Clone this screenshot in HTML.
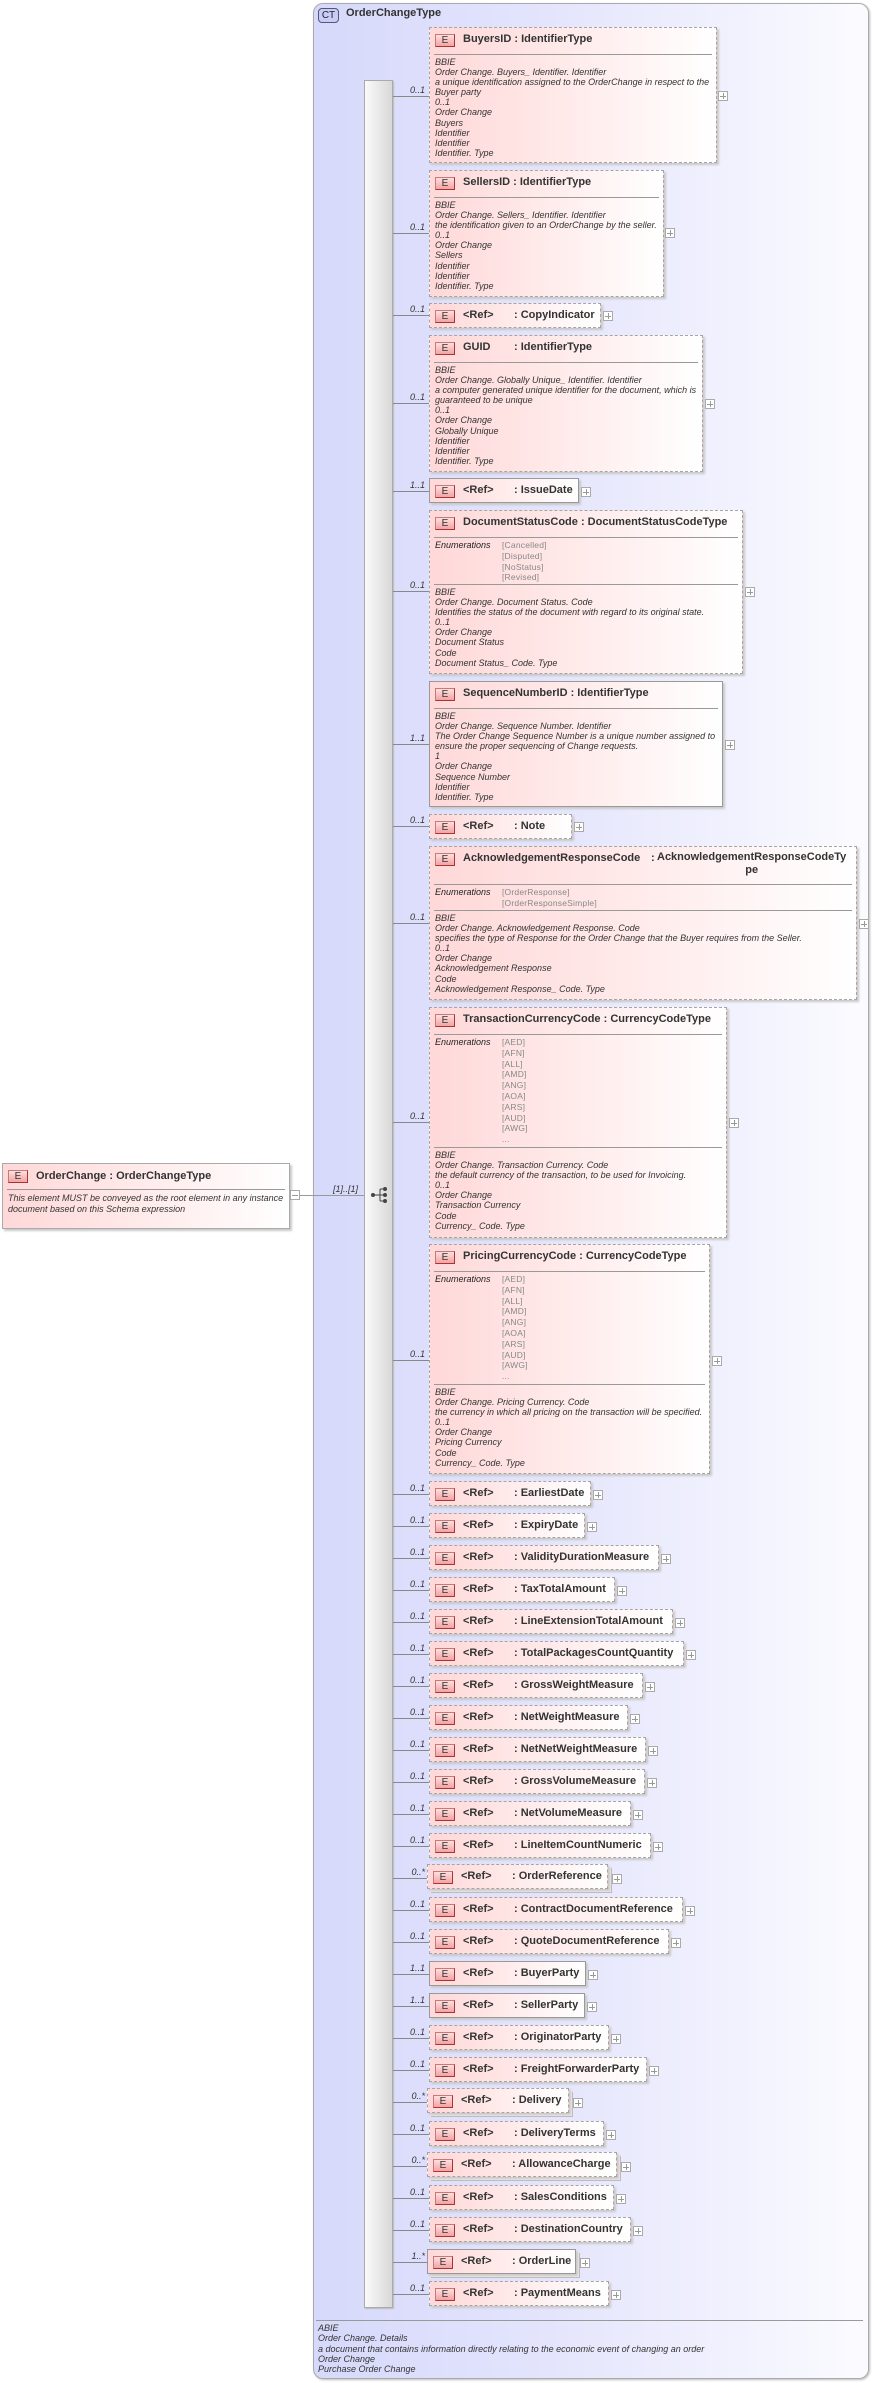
<!DOCTYPE html>
<html><head><meta charset="utf-8">
<style>
*{margin:0;padding:0}
body{width:874px;height:2383px;position:relative;background:#fff;font-family:"Liberation Sans",Arial,sans-serif;color:#222;overflow:hidden}
.ct{position:absolute;left:313px;top:3px;width:556px;height:2376px;box-sizing:border-box;border:1px solid #aaa;border-radius:10px;background:linear-gradient(to right,#d7d9fb 0%,#e3e4fc 40%,#fbfbff 100%);box-shadow:1px 1px 2px #bbb}
.ctb{position:absolute;left:318px;top:8px;width:19px;height:13px;border:1px solid #557;border-radius:4px;background:#c9cdf5;font-size:10px;line-height:13px;text-align:center;color:#223}
.ctt{position:absolute;left:346px;top:7px;font-size:11px;font-weight:bold;color:#333}
.bar{position:absolute;left:364px;top:80px;width:29px;height:2228px;box-sizing:border-box;border:1px solid #aaa;background:linear-gradient(to right,#fafafa,#d8d8d8);box-shadow:1px 1px 1px #bbb}
.b{position:absolute;left:429px;box-sizing:border-box;border:1px dashed #a5a5a5;background:linear-gradient(to right,#ffd8d8 0%,#ffe9e9 45%,#ffffff 100%);box-shadow:2px 2px 2px #c8c8c8}
.s{border-style:solid;border-color:#999}
.e{position:absolute;left:5px;top:6px;width:20px;height:13px;box-sizing:border-box;border:1px solid #a33;border-top-color:#c77;border-left-color:#c77;background:linear-gradient(#fde0e0,#f3a3a3);font-size:10px;line-height:12px;text-align:center;color:#333}
.t{position:absolute;left:33px;top:5px;font-size:11px;font-weight:bold;white-space:nowrap;color:#333}
.t2{position:absolute;left:84px;top:5px;font-size:11px;font-weight:bold;white-space:nowrap;color:#333}
.hr{position:absolute;left:4px;right:4px;height:0;border-top:1px solid #999}
.ds{position:absolute;left:5px;font-size:9px;line-height:10.1px;font-style:italic;white-space:nowrap;color:#333}
.en{position:absolute;left:5px;font-size:9px;font-style:italic;color:#222}
.ev{position:absolute;left:72px;font-size:8.5px;line-height:10.8px;color:#888;white-space:nowrap;letter-spacing:.2px}
.ln{position:absolute;left:393px;width:36px;height:0;border-top:1px solid #888}
.m{position:absolute;left:395px;width:30px;text-align:right;font-size:9px;font-style:italic;color:#333}
.p{position:absolute;width:8px;height:8px;border:1px solid #aaa;background:#fff}
.p:before{content:"";position:absolute;left:1px;top:4px;width:6px;height:1px;background:#999}
.p:after{content:"";position:absolute;left:4px;top:1px;width:1px;height:6px;background:#999}
.mul{box-shadow:2px 2px 2px #c8c8c8,3px 3px 0 0 #f7e8e8,4px 4px 0 0 #bbb}
</style></head><body>

<!-- root element -->
<div class="b s" style="left:2px;top:1163px;width:288px;height:66px;border-color:#aaa">
  <span class="e">E</span><span class="t" style="top:6px">OrderChange : OrderChangeType</span>
  <div class="hr" style="top:25px"></div>
  <div class="ds" style="top:29px;line-height:10.5px">This element MUST be conveyed as the root element in any instance<br>document based on this Schema expression</div>
</div>
<div style="position:absolute;left:290px;top:1190px;width:8px;height:8px;border:1px solid #aaa;background:#fff"><div style="position:absolute;left:1px;top:4px;width:6px;height:1px;background:#999"></div></div>
<div style="position:absolute;left:299px;top:1195px;width:65px;border-top:1px solid #999"></div>

<div class="ct"></div>
<div class="ctb">CT</div>
<div class="ctt">OrderChangeType</div>
<div style="position:absolute;left:313px;top:1195px;width:51px;border-top:1px solid #999"></div>
<div style="position:absolute;left:333px;top:1184px;font-size:9px;font-style:italic;color:#333">[1]..[1]</div>
<div class="bar"></div>
<svg style="position:absolute;left:370px;top:1186px" width="20" height="20" viewBox="0 0 20 20">
<circle cx="3" cy="9" r="2" fill="#444"/><line x1="3" y1="9" x2="10" y2="9" stroke="#444"/><line x1="10" y1="3" x2="10" y2="15" stroke="#444"/>
<line x1="10" y1="3" x2="15" y2="3" stroke="#444"/><line x1="10" y1="9" x2="15" y2="9" stroke="#444"/><line x1="10" y1="15" x2="15" y2="15" stroke="#444"/>
<circle cx="15" cy="3" r="2" fill="#444"/><circle cx="15" cy="9" r="2" fill="#444"/><circle cx="15" cy="15" r="2" fill="#444"/></svg>

<!-- BuyersID -->
<div class="ln" style="top:96px"></div><div class="m" style="top:85px">0..1</div>
<div class="b" style="top:27px;width:288px;height:136px"><span class="e">E</span><span class="t">BuyersID : IdentifierType</span><div class="hr" style="top:26px"></div>
<div class="ds" style="top:29px">BBIE<br>Order Change. Buyers_ Identifier. Identifier<br>a unique identification assigned to the OrderChange in respect to the<br>Buyer party<br>0..1<br>Order Change<br>Buyers<br>Identifier<br>Identifier<br>Identifier. Type</div></div>
<div class="p" style="left:718px;top:91px"></div>

<!-- SellersID -->
<div class="ln" style="top:233px"></div><div class="m" style="top:222px">0..1</div>
<div class="b" style="top:170px;width:235px;height:127px"><span class="e">E</span><span class="t">SellersID : IdentifierType</span><div class="hr" style="top:26px"></div>
<div class="ds" style="top:29px">BBIE<br>Order Change. Sellers_ Identifier. Identifier<br>the identification given to an OrderChange by the seller.<br>0..1<br>Order Change<br>Sellers<br>Identifier<br>Identifier<br>Identifier. Type</div></div>
<div class="p" style="left:665px;top:228px"></div>

<!-- CopyIndicator -->
<div class="ln" style="top:315px"></div><div class="m" style="top:304px">0..1</div>
<div class="b" style="top:303px;width:172px;height:25px"><span class="e">E</span><span class="t">&lt;Ref&gt;</span><span class="t2">: CopyIndicator</span></div>
<div class="p" style="left:603px;top:311px"></div>

<!-- GUID -->
<div class="ln" style="top:403px"></div><div class="m" style="top:392px">0..1</div>
<div class="b" style="top:335px;width:274px;height:137px"><span class="e">E</span><span class="t">GUID</span><span class="t2">: IdentifierType</span><div class="hr" style="top:26px"></div>
<div class="ds" style="top:29px">BBIE<br>Order Change. Globally Unique_ Identifier. Identifier<br>a computer generated unique identifier for the document, which is<br>guaranteed to be unique<br>0..1<br>Order Change<br>Globally Unique<br>Identifier<br>Identifier<br>Identifier. Type</div></div>
<div class="p" style="left:705px;top:399px"></div>

<!-- IssueDate -->
<div class="ln" style="top:491px"></div><div class="m" style="top:480px">1..1</div>
<div class="b s" style="top:478px;width:150px;height:25px"><span class="e">E</span><span class="t">&lt;Ref&gt;</span><span class="t2">: IssueDate</span></div>
<div class="p" style="left:581px;top:487px"></div>

<!-- DocumentStatusCode -->
<div class="ln" style="top:591px"></div><div class="m" style="top:580px">0..1</div>
<div class="b" style="top:510px;width:314px;height:164px"><span class="e">E</span><span class="t">DocumentStatusCode : DocumentStatusCodeType</span><div class="hr" style="top:26px"></div>
<div class="en" style="top:29px">Enumerations</div><div class="ev" style="top:29px">[Cancelled]<br>[Disputed]<br>[NoStatus]<br>[Revised]</div>
<div class="hr" style="top:73px"></div>
<div class="ds" style="top:76px">BBIE<br>Order Change. Document Status. Code<br>Identifies the status of the document with regard to its original state.<br>0..1<br>Order Change<br>Document Status<br>Code<br>Document Status_ Code. Type</div></div>
<div class="p" style="left:745px;top:587px"></div>

<!-- SequenceNumberID -->
<div class="ln" style="top:744px"></div><div class="m" style="top:733px">1..1</div>
<div class="b s" style="top:681px;width:294px;height:126px"><span class="e">E</span><span class="t">SequenceNumberID : IdentifierType</span><div class="hr" style="top:26px"></div>
<div class="ds" style="top:29px">BBIE<br>Order Change. Sequence Number. Identifier<br>The Order Change Sequence Number is a unique number assigned to<br>ensure the proper sequencing of Change requests.<br>1<br>Order Change<br>Sequence Number<br>Identifier<br>Identifier. Type</div></div>
<div class="p" style="left:725px;top:740px"></div>

<!-- Note -->
<div class="ln" style="top:826px"></div><div class="m" style="top:815px">0..1</div>
<div class="b" style="top:814px;width:143px;height:25px"><span class="e">E</span><span class="t">&lt;Ref&gt;</span><span class="t2">: Note</span></div>
<div class="p" style="left:574px;top:822px"></div>

<!-- AcknowledgementResponseCode -->
<div class="ln" style="top:923px"></div><div class="m" style="top:912px">0..1</div>
<div class="b" style="top:846px;width:428px;height:154px"><span class="e">E</span><span class="t">AcknowledgementResponseCode</span><span class="t" style="left:221px">:</span><span class="t" style="left:227px;line-height:13px;text-align:center;top:4px">AcknowledgementResponseCodeTy<br>pe</span><div class="hr" style="top:37px"></div>
<div class="en" style="top:40px">Enumerations</div><div class="ev" style="top:40px">[OrderResponse]<br>[OrderResponseSimple]</div>
<div class="hr" style="top:63px"></div>
<div class="ds" style="top:66px">BBIE<br>Order Change. Acknowledgement Response. Code<br>specifies the type of Response for the Order Change that the Buyer requires from the Seller.<br>0..1<br>Order Change<br>Acknowledgement Response<br>Code<br>Acknowledgement Response_ Code. Type</div></div>
<div class="p" style="left:859px;top:919px"></div>

<!-- TransactionCurrencyCode -->
<div class="ln" style="top:1122px"></div><div class="m" style="top:1111px">0..1</div>
<div class="b" style="top:1007px;width:298px;height:231px"><span class="e">E</span><span class="t">TransactionCurrencyCode : CurrencyCodeType</span><div class="hr" style="top:26px"></div>
<div class="en" style="top:29px">Enumerations</div><div class="ev" style="top:29px">[AED]<br>[AFN]<br>[ALL]<br>[AMD]<br>[ANG]<br>[AOA]<br>[ARS]<br>[AUD]<br>[AWG]<br>...</div>
<div class="hr" style="top:139px"></div>
<div class="ds" style="top:142px">BBIE<br>Order Change. Transaction Currency. Code<br>the default currency of the transaction, to be used for Invoicing.<br>0..1<br>Order Change<br>Transaction Currency<br>Code<br>Currency_ Code. Type</div></div>
<div class="p" style="left:729px;top:1118px"></div>

<!-- PricingCurrencyCode -->
<div class="ln" style="top:1360px"></div><div class="m" style="top:1349px">0..1</div>
<div class="b" style="top:1244px;width:281px;height:230px"><span class="e">E</span><span class="t">PricingCurrencyCode : CurrencyCodeType</span><div class="hr" style="top:26px"></div>
<div class="en" style="top:29px">Enumerations</div><div class="ev" style="top:29px">[AED]<br>[AFN]<br>[ALL]<br>[AMD]<br>[ANG]<br>[AOA]<br>[ARS]<br>[AUD]<br>[AWG]<br>...</div>
<div class="hr" style="top:139px"></div>
<div class="ds" style="top:142px">BBIE<br>Order Change. Pricing Currency. Code<br>the currency in which all pricing on the transaction will be specified.<br>0..1<br>Order Change<br>Pricing Currency<br>Code<br>Currency_ Code. Type</div></div>
<div class="p" style="left:712px;top:1356px"></div>

<!-- refs -->
<div class="ln" style="top:1494px"></div><div class="m" style="top:1483px">0..1</div><div class="b" style="top:1481px;width:162px;height:25px"><span class="e">E</span><span class="t">&lt;Ref&gt;</span><span class="t2">: EarliestDate</span></div><div class="p" style="left:593px;top:1490px"></div>
<div class="ln" style="top:1526px"></div><div class="m" style="top:1515px">0..1</div><div class="b" style="top:1513px;width:156px;height:25px"><span class="e">E</span><span class="t">&lt;Ref&gt;</span><span class="t2">: ExpiryDate</span></div><div class="p" style="left:587px;top:1522px"></div>
<div class="ln" style="top:1558px"></div><div class="m" style="top:1547px">0..1</div><div class="b" style="top:1545px;width:230px;height:25px"><span class="e">E</span><span class="t">&lt;Ref&gt;</span><span class="t2">: ValidityDurationMeasure</span></div><div class="p" style="left:661px;top:1554px"></div>
<div class="ln" style="top:1590px"></div><div class="m" style="top:1579px">0..1</div><div class="b" style="top:1577px;width:186px;height:25px"><span class="e">E</span><span class="t">&lt;Ref&gt;</span><span class="t2">: TaxTotalAmount</span></div><div class="p" style="left:617px;top:1586px"></div>
<div class="ln" style="top:1622px"></div><div class="m" style="top:1611px">0..1</div><div class="b" style="top:1609px;width:244px;height:25px"><span class="e">E</span><span class="t">&lt;Ref&gt;</span><span class="t2">: LineExtensionTotalAmount</span></div><div class="p" style="left:675px;top:1618px"></div>
<div class="ln" style="top:1654px"></div><div class="m" style="top:1643px">0..1</div><div class="b" style="top:1641px;width:255px;height:25px"><span class="e">E</span><span class="t">&lt;Ref&gt;</span><span class="t2">: TotalPackagesCountQuantity</span></div><div class="p" style="left:686px;top:1650px"></div>
<div class="ln" style="top:1686px"></div><div class="m" style="top:1675px">0..1</div><div class="b" style="top:1673px;width:214px;height:25px"><span class="e">E</span><span class="t">&lt;Ref&gt;</span><span class="t2">: GrossWeightMeasure</span></div><div class="p" style="left:645px;top:1682px"></div>
<div class="ln" style="top:1718px"></div><div class="m" style="top:1707px">0..1</div><div class="b" style="top:1705px;width:199px;height:25px"><span class="e">E</span><span class="t">&lt;Ref&gt;</span><span class="t2">: NetWeightMeasure</span></div><div class="p" style="left:630px;top:1714px"></div>
<div class="ln" style="top:1750px"></div><div class="m" style="top:1739px">0..1</div><div class="b" style="top:1737px;width:217px;height:25px"><span class="e">E</span><span class="t">&lt;Ref&gt;</span><span class="t2">: NetNetWeightMeasure</span></div><div class="p" style="left:648px;top:1746px"></div>
<div class="ln" style="top:1782px"></div><div class="m" style="top:1771px">0..1</div><div class="b" style="top:1769px;width:216px;height:25px"><span class="e">E</span><span class="t">&lt;Ref&gt;</span><span class="t2">: GrossVolumeMeasure</span></div><div class="p" style="left:647px;top:1778px"></div>
<div class="ln" style="top:1814px"></div><div class="m" style="top:1803px">0..1</div><div class="b" style="top:1801px;width:202px;height:25px"><span class="e">E</span><span class="t">&lt;Ref&gt;</span><span class="t2">: NetVolumeMeasure</span></div><div class="p" style="left:633px;top:1810px"></div>
<div class="ln" style="top:1846px"></div><div class="m" style="top:1835px">0..1</div><div class="b" style="top:1833px;width:222px;height:25px"><span class="e">E</span><span class="t">&lt;Ref&gt;</span><span class="t2">: LineItemCountNumeric</span></div><div class="p" style="left:653px;top:1842px"></div>
<div class="ln" style="top:1878px"></div><div class="m" style="top:1867px">0..*</div><div class="b mul" style="top:1864px;left:427px;width:181px;height:25px"><span class="e">E</span><span class="t">&lt;Ref&gt;</span><span class="t2">: OrderReference</span></div><div class="p" style="left:612px;top:1874px"></div>
<div class="ln" style="top:1910px"></div><div class="m" style="top:1899px">0..1</div><div class="b" style="top:1897px;width:254px;height:25px"><span class="e">E</span><span class="t">&lt;Ref&gt;</span><span class="t2">: ContractDocumentReference</span></div><div class="p" style="left:685px;top:1906px"></div>
<div class="ln" style="top:1942px"></div><div class="m" style="top:1931px">0..1</div><div class="b" style="top:1929px;width:240px;height:25px"><span class="e">E</span><span class="t">&lt;Ref&gt;</span><span class="t2">: QuoteDocumentReference</span></div><div class="p" style="left:671px;top:1938px"></div>
<div class="ln" style="top:1974px"></div><div class="m" style="top:1963px">1..1</div><div class="b s" style="top:1961px;width:157px;height:25px"><span class="e">E</span><span class="t">&lt;Ref&gt;</span><span class="t2">: BuyerParty</span></div><div class="p" style="left:588px;top:1970px"></div>
<div class="ln" style="top:2006px"></div><div class="m" style="top:1995px">1..1</div><div class="b s" style="top:1993px;width:156px;height:25px"><span class="e">E</span><span class="t">&lt;Ref&gt;</span><span class="t2">: SellerParty</span></div><div class="p" style="left:587px;top:2002px"></div>
<div class="ln" style="top:2038px"></div><div class="m" style="top:2027px">0..1</div><div class="b" style="top:2025px;width:180px;height:25px"><span class="e">E</span><span class="t">&lt;Ref&gt;</span><span class="t2">: OriginatorParty</span></div><div class="p" style="left:611px;top:2034px"></div>
<div class="ln" style="top:2070px"></div><div class="m" style="top:2059px">0..1</div><div class="b" style="top:2057px;width:218px;height:25px"><span class="e">E</span><span class="t">&lt;Ref&gt;</span><span class="t2">: FreightForwarderParty</span></div><div class="p" style="left:649px;top:2066px"></div>
<div class="ln" style="top:2102px"></div><div class="m" style="top:2091px">0..*</div><div class="b mul" style="top:2088px;left:427px;width:142px;height:25px"><span class="e">E</span><span class="t">&lt;Ref&gt;</span><span class="t2">: Delivery</span></div><div class="p" style="left:573px;top:2098px"></div>
<div class="ln" style="top:2134px"></div><div class="m" style="top:2123px">0..1</div><div class="b" style="top:2121px;width:175px;height:25px"><span class="e">E</span><span class="t">&lt;Ref&gt;</span><span class="t2">: DeliveryTerms</span></div><div class="p" style="left:606px;top:2130px"></div>
<div class="ln" style="top:2166px"></div><div class="m" style="top:2155px">0..*</div><div class="b mul" style="top:2152px;left:427px;width:190px;height:25px"><span class="e">E</span><span class="t">&lt;Ref&gt;</span><span class="t2">: AllowanceCharge</span></div><div class="p" style="left:621px;top:2162px"></div>
<div class="ln" style="top:2198px"></div><div class="m" style="top:2187px">0..1</div><div class="b" style="top:2185px;width:185px;height:25px"><span class="e">E</span><span class="t">&lt;Ref&gt;</span><span class="t2">: SalesConditions</span></div><div class="p" style="left:616px;top:2194px"></div>
<div class="ln" style="top:2230px"></div><div class="m" style="top:2219px">0..1</div><div class="b" style="top:2217px;width:202px;height:25px"><span class="e">E</span><span class="t">&lt;Ref&gt;</span><span class="t2">: DestinationCountry</span></div><div class="p" style="left:633px;top:2226px"></div>
<div class="ln" style="top:2262px"></div><div class="m" style="top:2251px">1..*</div><div class="b s mul" style="top:2249px;left:427px;width:149px;height:25px"><span class="e">E</span><span class="t">&lt;Ref&gt;</span><span class="t2">: OrderLine</span></div><div class="p" style="left:580px;top:2258px"></div>
<div class="ln" style="top:2294px"></div><div class="m" style="top:2283px">0..1</div><div class="b" style="top:2281px;width:180px;height:25px"><span class="e">E</span><span class="t">&lt;Ref&gt;</span><span class="t2">: PaymentMeans</span></div><div class="p" style="left:611px;top:2290px"></div>

<!-- footer -->
<div style="position:absolute;left:316px;top:2320px;width:547px;border-top:1px solid #999"></div>
<div class="ds" style="left:318px;top:2323px;line-height:10.3px">ABIE<br>Order Change. Details<br>a document that contains information directly relating to the economic event of changing an order<br>Order Change<br>Purchase Order Change</div>

</body></html>
